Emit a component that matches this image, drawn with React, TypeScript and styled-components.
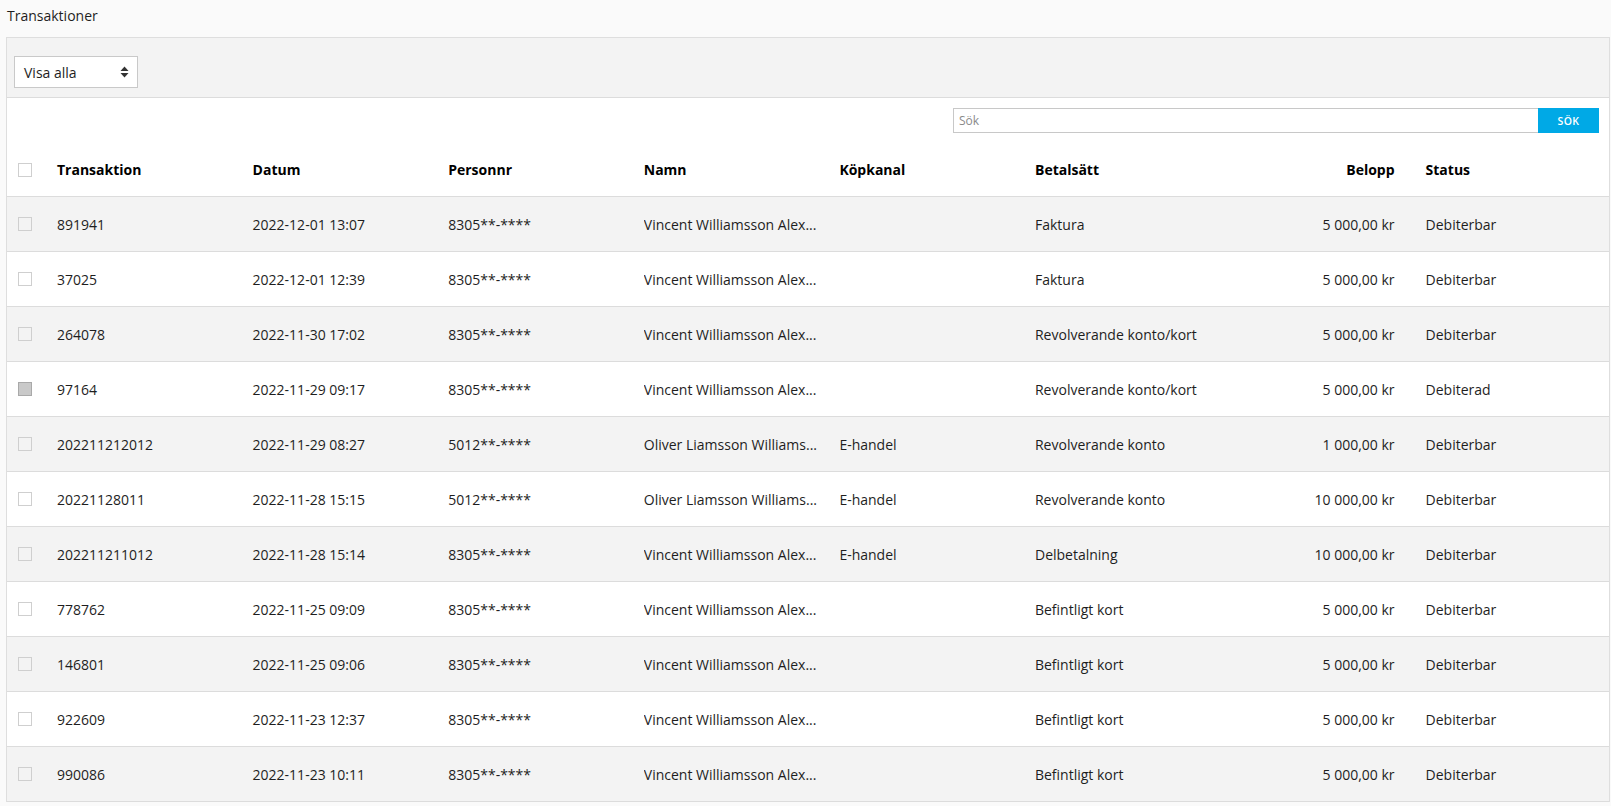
import React from "react";
import styled, { createGlobalStyle } from "styled-components";

const GlobalStyle = createGlobalStyle`
  html, body {
    margin: 0;
    padding: 0;
    background: #fafafa;
    font-family: "Open Sans", "Noto Sans", Arial, sans-serif;
    color: #1e1e1e;
  }
  * { box-sizing: border-box; }
`;

const Page = styled.div`
  width: 1611px;
  height: 806px;
  overflow: hidden;
`;

const Title = styled.h1`
  margin: 0;
  height: 37px;
  padding: 6px 7px 0;
  font-size: 14px;
  line-height: 19px;
  font-weight: 400;
  color: #1e1e1e;
`;

const Panel = styled.section`
  margin-left: 6px;
  margin-right: 1px;
  border: 1px solid #dedede;
  border-bottom: none;
  background: #fff;
`;

const PanelHeader = styled.div`
  background: #f3f3f3;
  padding: 18px 0 9px 7px;
  border-bottom: 1px solid #dcdcdc;
  display: flex;
  align-items: center;
`;

const SelectBox = styled.div`
  width: 124px;
  height: 32px;
  background: #fff;
  border: 1px solid #c9c9c9;
  display: flex;
  align-items: center;
  justify-content: space-between;
  padding: 0 8px 0 9px;
  font-size: 14px;
  color: #1e1e1e;
`;

const SearchBar = styled.div`
  display: flex;
  justify-content: flex-end;
  padding: 10px 10px 10px 0;
`;

const SearchInput = styled.div`
  width: 585px;
  height: 25px;
  border: 1px solid #c8c8c8;
  border-right: none;
  display: flex;
  align-items: center;
  padding-left: 5px;
  font-size: 12px;
  color: #8a8a8a;
`;

const SearchButton = styled.button`
  width: 61px;
  height: 25px;
  border: none;
  background: #00a9e6;
  color: #fff;
  font-family: inherit;
  font-size: 10.5px;
  font-weight: 600;
  letter-spacing: 0.4px;
  padding: 0;
`;

const Row = styled.div<{ $head?: boolean; $alt?: boolean }>`
  display: grid;
  grid-template-columns: 50px repeat(6, 195.6px) 164px 1fr;
  align-items: center;
  height: ${(p) => (p.$head ? "54px" : "55px")};
  border-bottom: 1px solid #dcdcdc;
  background: ${(p) => (p.$alt ? "#f3f3f3" : "#fff")};
  font-size: 14px;
  font-weight: ${(p) => (p.$head ? 700 : 400)};
  color: ${(p) => (p.$head ? "#000" : "#1e1e1e")};
`;

const Cell = styled.div<{ $right?: boolean; $pad?: number; $trunc?: boolean }>`
  white-space: nowrap;
  text-align: ${(p) => (p.$right ? "right" : "left")};
  padding-left: ${(p) => p.$pad ?? 0}px;
  padding-right: ${(p) => (p.$trunc ? 12 : 0)}px;
  overflow: ${(p) => (p.$trunc ? "hidden" : "visible")};
  text-overflow: ${(p) => (p.$trunc ? "ellipsis" : "clip")};
`;

const CheckCell = styled.div`
  padding-left: 11px;
  display: flex;
  align-items: center;
`;

const Check = styled.span<{ $disabled?: boolean; $alt?: boolean }>`
  width: 14px;
  height: 14px;
  border: 1px solid ${(p) => (p.$disabled ? "#a9a9a9" : "#cfcfcf")};
  background: ${(p) => (p.$disabled ? "#c9c9c9" : p.$alt ? "#f3f3f3" : "#fff")};
`;

type Tx = {
  id: string;
  date: string;
  pnr: string;
  name: string;
  channel: string;
  method: string;
  amount: string;
  status: string;
  disabled?: boolean;
};

const V = "Vincent Williamsson Alex...";
const O = "Oliver Liamsson Williams...";

const rows: Tx[] = [
  { id: "891941", date: "2022-12-01 13:07", pnr: "8305**-****", name: V, channel: "", method: "Faktura", amount: "5 000,00 kr", status: "Debiterbar" },
  { id: "37025", date: "2022-12-01 12:39", pnr: "8305**-****", name: V, channel: "", method: "Faktura", amount: "5 000,00 kr", status: "Debiterbar" },
  { id: "264078", date: "2022-11-30 17:02", pnr: "8305**-****", name: V, channel: "", method: "Revolverande konto/kort", amount: "5 000,00 kr", status: "Debiterbar" },
  { id: "97164", date: "2022-11-29 09:17", pnr: "8305**-****", name: V, channel: "", method: "Revolverande konto/kort", amount: "5 000,00 kr", status: "Debiterad", disabled: true },
  { id: "202211212012", date: "2022-11-29 08:27", pnr: "5012**-****", name: O, channel: "E-handel", method: "Revolverande konto", amount: "1 000,00 kr", status: "Debiterbar" },
  { id: "20221128011", date: "2022-11-28 15:15", pnr: "5012**-****", name: O, channel: "E-handel", method: "Revolverande konto", amount: "10 000,00 kr", status: "Debiterbar" },
  { id: "202211211012", date: "2022-11-28 15:14", pnr: "8305**-****", name: V, channel: "E-handel", method: "Delbetalning", amount: "10 000,00 kr", status: "Debiterbar" },
  { id: "778762", date: "2022-11-25 09:09", pnr: "8305**-****", name: V, channel: "", method: "Befintligt kort", amount: "5 000,00 kr", status: "Debiterbar" },
  { id: "146801", date: "2022-11-25 09:06", pnr: "8305**-****", name: V, channel: "", method: "Befintligt kort", amount: "5 000,00 kr", status: "Debiterbar" },
  { id: "922609", date: "2022-11-23 12:37", pnr: "8305**-****", name: V, channel: "", method: "Befintligt kort", amount: "5 000,00 kr", status: "Debiterbar" },
  { id: "990086", date: "2022-11-23 10:11", pnr: "8305**-****", name: V, channel: "", method: "Befintligt kort", amount: "5 000,00 kr", status: "Debiterbar" },
];

const SortArrows = () => (
  <svg width="9" height="12" viewBox="0 0 9 12" aria-hidden>
    <path d="M4.5 0.5 L8.5 5 L0.5 5 Z" fill="#333" />
    <path d="M4.5 11.5 L8.5 7 L0.5 7 Z" fill="#333" />
  </svg>
);

export default function App() {
  return (
    <Page>
      <GlobalStyle />
      <Title>Transaktioner</Title>
      <Panel>
        <PanelHeader>
          <SelectBox>
            <span>Visa alla</span>
            <SortArrows />
          </SelectBox>
        </PanelHeader>
        <SearchBar>
          <SearchInput>Sök</SearchInput>
          <SearchButton>SÖK</SearchButton>
        </SearchBar>
        <Row $head>
          <CheckCell>
            <Check />
          </CheckCell>
          <Cell>Transaktion</Cell>
          <Cell>Datum</Cell>
          <Cell>Personnr</Cell>
          <Cell>Namn</Cell>
          <Cell>Köpkanal</Cell>
          <Cell>Betalsätt</Cell>
          <Cell $right>Belopp</Cell>
          <Cell $pad={31}>Status</Cell>
        </Row>
        {rows.map((r, i) => (
          <Row key={r.id} $alt={i % 2 === 0}>
            <CheckCell>
              <Check $alt={i % 2 === 0} $disabled={r.disabled} />
            </CheckCell>
            <Cell>{r.id}</Cell>
            <Cell>{r.date}</Cell>
            <Cell>{r.pnr}</Cell>
            <Cell $trunc>{r.name}</Cell>
            <Cell>{r.channel}</Cell>
            <Cell>{r.method}</Cell>
            <Cell $right>{r.amount}</Cell>
            <Cell $pad={31}>{r.status}</Cell>
          </Row>
        ))}
      </Panel>
    </Page>
  );
}
